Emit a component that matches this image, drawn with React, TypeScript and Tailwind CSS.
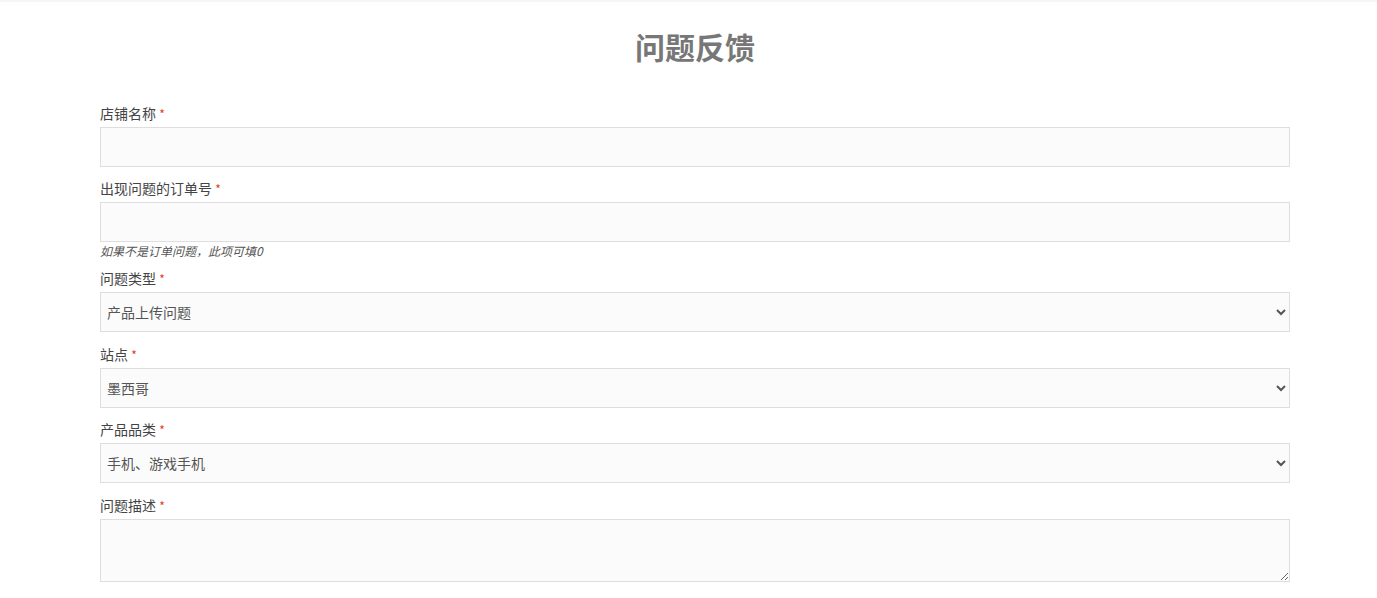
const font = { fontFamily: '"Noto Sans CJK SC", "Noto Sans", sans-serif' };

function Label({ text, className = "" }: { text: string; className?: string }) {
  return (
    <label className={`block h-5 text-[14px] leading-[19px] text-[#444] mb-[3px] ${className}`}>
      {text} <span className="text-[#e2401c] text-[12px]">*</span>
    </label>
  );
}

const inputCls =
  "block w-full border border-[#dedede] bg-[#fbfbfb] text-[14px] text-[#555] outline-none";

export default function App() {
  return (
    <div className="min-h-[598px] bg-white border-t-2 border-[#f6f6f6]" style={font}>
      <div className="ml-[100px] w-[1190px]">
        <h1 className="mt-[26px] mb-[40px] text-center text-[30px] leading-9 font-bold text-[#777]">
          问题反馈
        </h1>

        <form>
          <Label text="店铺名称" />
          <input type="text" className={`${inputCls} h-10 px-2`} />

          <Label text="出现问题的订单号" className="mt-3" />
          <input type="text" className={`${inputCls} h-10 px-2`} />
          <p className="mt-[2px] h-[14px] text-[12px] leading-[14px] italic text-[#555]">
            如果不是订单问题，此项可填0
          </p>

          <Label text="问题类型" className="mt-[11px]" />
          <select className={`${inputCls} h-10 pl-[2px] pr-2`} defaultValue="产品上传问题">
            <option>产品上传问题</option>
            <option>订单问题</option>
            <option>其他问题</option>
          </select>

          <Label text="站点" className="mt-[13px]" />
          <select className={`${inputCls} h-10 pl-[2px] pr-2`} defaultValue="墨西哥">
            <option>墨西哥</option>
            <option>巴西</option>
            <option>智利</option>
          </select>

          <Label text="产品品类" className="mt-3" />
          <select className={`${inputCls} h-10 pl-[2px] pr-2`} defaultValue="手机、游戏手机">
            <option>手机、游戏手机</option>
            <option>电脑配件</option>
          </select>

          <Label text="问题描述" className="mt-[13px]" />
          <textarea className={`${inputCls} h-[63px] px-2 py-1`} />
        </form>
      </div>
    </div>
  );
}
